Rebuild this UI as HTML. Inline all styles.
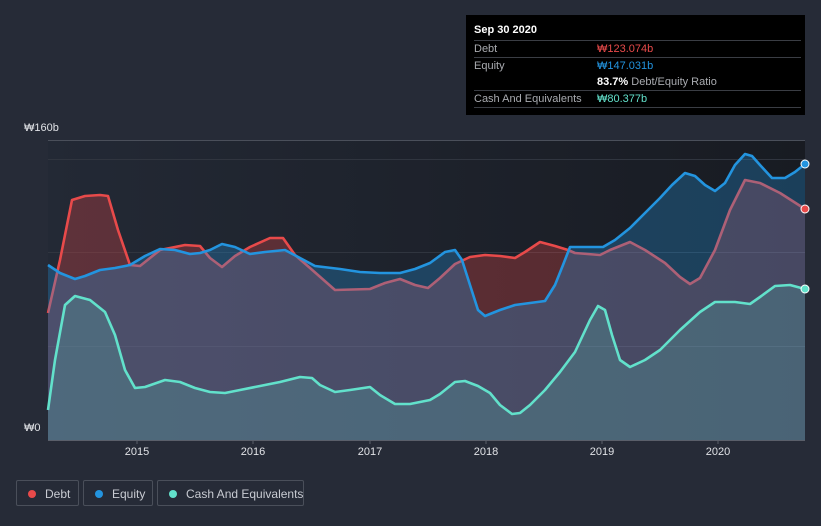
<!DOCTYPE html>
<html><head><meta charset="utf-8"><style>
body{margin:0;width:821px;height:526px;background:#262b37;font-family:"Liberation Sans","Noto Sans CJK KR",sans-serif;overflow:hidden;position:relative}
.tt{position:absolute;left:466px;top:15px;width:339px;height:100px;background:#000;color:#fff;font-size:11px}
.tt .r{position:absolute;left:8px;right:4px;height:17px;line-height:17px;border-top:1px solid #3a3d44;color:#a9abb0;white-space:nowrap}
.tt .v{position:absolute;left:123px}
.leg{position:absolute;top:480px;height:26px;border:1px solid #4a4f5a;border-radius:2px;color:#c8cbd2;font-size:12px;line-height:26px;box-sizing:border-box;white-space:nowrap}
.leg i{position:absolute;left:11px;top:9px;width:8px;height:8px;border-radius:50%}
.leg span{position:absolute;left:28px}
.ax{position:absolute;top:446px;color:#e0e2e6;font-size:11px;width:40px;text-align:center}
</style></head><body>
<svg width="821" height="526" style="position:absolute;left:0;top:0">
<defs><linearGradient id="bg" x1="0" x2="1" y1="0" y2="0"><stop offset="0" stop-color="#232935"/><stop offset="1" stop-color="#181b22"/></linearGradient></defs>
<rect x="48" y="140" width="757" height="300" fill="url(#bg)"/>
<line x1="48" y1="140.5" x2="805" y2="140.5" stroke="#4a4f5a"/>
<line x1="48" y1="159.5" x2="805" y2="159.5" stroke="#30353f"/>
<line x1="48" y1="252.5" x2="805" y2="252.5" stroke="#30353f"/>
<line x1="48" y1="346.5" x2="805" y2="346.5" stroke="#30353f"/>
<g stroke-width="2.6" fill-opacity="0.3" stroke-linejoin="round">
<path fill="#e84a4a" stroke="none" d="M48,313 L60,260 72,200 85,196 100,195 108,196 118,230 130,265 140,266 160,250 185,245 200,246 210,258 222,267 235,256 250,247 270,238 283,238 295,255 310,268 335,290 370,289 385,283 400,279 415,285 428,288 440,278 455,264 470,257 485,255 500,256 515,258 525,252 540,242 555,246 568,250 575,253 600,255 610,250 630,242 645,250 665,263 680,277 690,284 700,278 715,250 730,210 745,180 760,183 780,193 805,209 L805,440 48,440Z"/>
<path fill="none" stroke="#e84a4a" d="M48,313 L60,260 72,200 85,196 100,195 108,196 118,230 130,265 140,266 160,250 185,245 200,246 210,258 222,267 235,256 250,247 270,238 283,238 295,255 310,268 335,290 370,289 385,283 400,279 415,285 428,288 440,278 455,264 470,257 485,255 500,256 515,258 525,252 540,242 555,246 568,250 575,253 600,255 610,250 630,242 645,250 665,263 680,277 690,284 700,278 715,250 730,210 745,180 760,183 780,193 805,209"/>
<path fill="#2394df" stroke="none" d="M48,265 L60,273 75,279 85,276 100,270 115,268 130,265 145,256 160,249 175,250 190,254 200,253 210,250 222,244 235,247 250,254 265,252 285,250 300,258 315,266 340,269 360,272 380,273 400,273 415,269 430,263 445,252 455,250 462,260 470,285 478,310 485,316 500,310 515,305 530,303 545,301 555,285 563,265 570,247 590,247 603,247 615,240 630,228 645,213 660,198 672,185 685,173 695,176 705,185 715,191 725,183 735,165 745,154 752,156 760,165 772,178 785,178 795,172 805,164 L805,440 48,440Z"/>
<path fill="none" stroke="#2394df" d="M48,265 L60,273 75,279 85,276 100,270 115,268 130,265 145,256 160,249 175,250 190,254 200,253 210,250 222,244 235,247 250,254 265,252 285,250 300,258 315,266 340,269 360,272 380,273 400,273 415,269 430,263 445,252 455,250 462,260 470,285 478,310 485,316 500,310 515,305 530,303 545,301 555,285 563,265 570,247 590,247 603,247 615,240 630,228 645,213 660,198 672,185 685,173 695,176 705,185 715,191 725,183 735,165 745,154 752,156 760,165 772,178 785,178 795,172 805,164"/>
<path fill="#58d3c4" fill-opacity="0.2" stroke="none" d="M48,410 L55,360 65,305 75,296 90,300 105,312 115,335 125,370 135,388 145,387 165,380 180,382 195,388 210,392 225,393 240,390 260,386 280,382 300,377 312,378 320,385 335,392 350,390 370,387 380,395 395,404 410,404 430,400 440,394 455,382 465,381 478,386 490,393 500,405 512,414 520,413 530,405 545,390 560,372 575,352 590,320 598,306 605,310 612,335 620,360 630,367 645,360 660,350 680,330 700,312 715,302 735,302 750,304 760,297 775,286 790,285 805,289 L805,440 48,440Z"/>
<path fill="none" stroke="#62e1cb" d="M48,410 L55,360 65,305 75,296 90,300 105,312 115,335 125,370 135,388 145,387 165,380 180,382 195,388 210,392 225,393 240,390 260,386 280,382 300,377 312,378 320,385 335,392 350,390 370,387 380,395 395,404 410,404 430,400 440,394 455,382 465,381 478,386 490,393 500,405 512,414 520,413 530,405 545,390 560,372 575,352 590,320 598,306 605,310 612,335 620,360 630,367 645,360 660,350 680,330 700,312 715,302 735,302 750,304 760,297 775,286 790,285 805,289"/>
</g>
<circle cx="805" cy="164" r="4" fill="#2394df" stroke="#fff" stroke-width="1"/>
<circle cx="805" cy="209" r="4" fill="#e84a4a" stroke="#fff" stroke-width="1"/>
<circle cx="805" cy="289" r="4" fill="#62e1cb" stroke="#fff" stroke-width="1"/>
<line x1="48" y1="440.5" x2="805" y2="440.5" stroke="#5a5f6a"/>
<g stroke="#5a5f6a"><line x1="137" y1="440" x2="137" y2="444"/><line x1="253" y1="440" x2="253" y2="444"/><line x1="370" y1="440" x2="370" y2="444"/><line x1="486" y1="440" x2="486" y2="444"/><line x1="602" y1="440" x2="602" y2="444"/><line x1="718" y1="440" x2="718" y2="444"/></g>
</svg>
<div style="position:absolute;left:24px;top:122px;color:#e0e2e6;font-size:11px">₩160b</div>
<div style="position:absolute;left:24px;top:422px;color:#e0e2e6;font-size:11px">₩0</div>
<div class="ax" style="left:117px">2015</div><div class="ax" style="left:233px">2016</div><div class="ax" style="left:350px">2017</div><div class="ax" style="left:466px">2018</div><div class="ax" style="left:582px">2019</div><div class="ax" style="left:698px">2020</div>
<div class="tt">
<div style="position:absolute;left:8px;top:9px;font-weight:bold">Sep 30 2020</div>
<div class="r" style="top:25px">Debt<span class="v" style="color:#e84a4a">₩123.074b</span></div>
<div class="r" style="top:42px">Equity<span class="v" style="color:#2394df">₩147.031b</span></div>
<div class="r" style="top:59px;border-top:none"><span class="v" style="color:#fff"><b>83.7%</b> <span style="color:#a9abb0">Debt/Equity Ratio</span></span></div>
<div class="r" style="top:75px">Cash And Equivalents<span class="v" style="color:#62e1cb">₩80.377b</span></div>
<div style="position:absolute;left:8px;right:4px;top:92px;border-top:1px solid #3a3d44"></div>
</div>
<div class="leg" style="left:16px;width:63px"><i style="background:#e84a4a"></i><span>Debt</span></div>
<div class="leg" style="left:83px;width:70px"><i style="background:#2394df"></i><span>Equity</span></div>
<div class="leg" style="left:157px;width:147px"><i style="background:#62e1cb"></i><span>Cash And Equivalents</span></div>
</body></html>
